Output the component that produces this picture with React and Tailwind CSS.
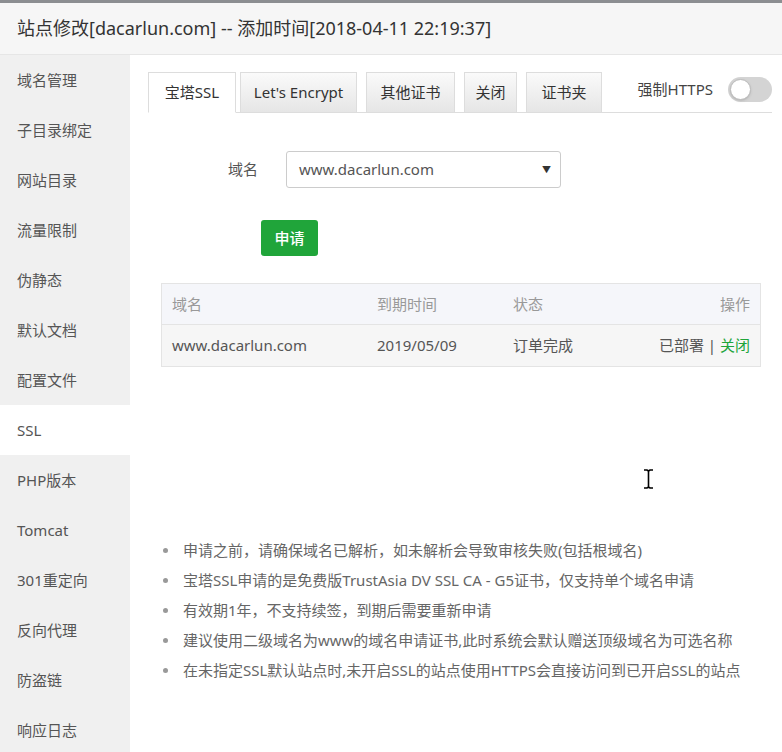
import React from "react";

const menu = [
  "域名管理",
  "子目录绑定",
  "网站目录",
  "流量限制",
  "伪静态",
  "默认文档",
  "配置文件",
  "SSL",
  "PHP版本",
  "Tomcat",
  "301重定向",
  "反向代理",
  "防盗链",
  "响应日志",
];

const tabs = [
  { name: "宝塔SSL", w: "w-[88px]", active: true },
  { name: "Let's Encrypt", w: "w-[117px]" },
  { name: "其他证书", w: "w-[89px]" },
  { name: "关闭", w: "w-[53px]" },
  { name: "证书夹", w: "w-[76px]" },
];

const tips = [
  "申请之前，请确保域名已解析，如未解析会导致审核失败(包括根域名)",
  "宝塔SSL申请的是免费版TrustAsia DV SSL CA - G5证书，仅支持单个域名申请",
  "有效期1年，不支持续签，到期后需要重新申请",
  "建议使用二级域名为www的域名申请证书,此时系统会默认赠送顶级域名为可选名称",
  "在未指定SSL默认站点时,未开启SSL的站点使用HTTPS会直接访问到已开启SSL的站点",
];

const font = {
  fontFamily: '"Noto Sans", "Noto Sans CJK SC", sans-serif',
};

export default function App() {
  return (
    <div
      className="w-[782px] h-[752px] overflow-hidden bg-white relative"
      style={font}
    >
      <div className="h-[3px] bg-[#8c8e91]" />
      <div className="h-[52px] bg-[#f6f6f6] border-b border-[#e6e6e6] pl-[17px] flex items-center text-[18px] text-[#333]">
        站点修改[dacarlun.com] -- 添加时间[2018-04-11 22:19:37]
      </div>

      <div className="flex">
        {/* sidebar */}
        <div className="w-[130px] shrink-0 bg-[#f0f0f0] h-[697px]">
          {menu.map((m) => (
            <div
              key={m}
              className={`h-[50px] flex items-center pl-[17px] text-[15px] text-[#555] ${
                m === "SSL" ? "bg-white" : ""
              }`}
            >
              {m}
            </div>
          ))}
        </div>

        {/* content */}
        <div className="flex-1 pl-[18px] pr-[10px] pt-[18px]">
          <div className="flex items-end border-b border-[#ddd] h-[40px]">
            {tabs.map((t) => (
              <div
                key={t.name}
                className={`${t.w} h-[40px] flex items-center justify-center text-[15px] text-[#333] border border-[#ddd] ${
                  t.active
                    ? "bg-white border-b-white mb-[-1px] h-[41px] mr-[4px]"
                    : "mr-[9px] bg-gradient-to-b from-[#fafafa] to-[#e6e6e6] border-b-0"
                }`}
              >
                {t.name}
              </div>
            ))}
            <div className="ml-auto self-center flex items-center mt-[-6px]">
              <span className="text-[15px] text-[#444] mr-[15px]">强制HTTPS</span>
              <div className="w-[44px] h-[25px] rounded-full bg-[#d4d4d4] p-[2px] flex items-center">
                <div className="w-[21px] h-[21px] rounded-full bg-white border border-[#bbb] shadow" />
              </div>
            </div>
          </div>

          <div className="flex items-center mt-[38px]">
            <div className="w-[112px] text-right text-[15px] text-[#555] pr-[2px]">域名</div>
            <div className="ml-[26px] w-[275px] h-[37px] border border-[#ccc] rounded-[3px] flex items-center justify-between pl-[12px] pr-[9px] text-[15px] text-[#555]">
              <span>www.dacarlun.com</span>
              <span className="text-[9px] text-[#333]">▼</span>
            </div>
          </div>

          <button className="mt-[32px] ml-[113px] w-[57px] h-[36px] bg-[#20a53a] rounded-[3px] text-white text-[15px] font-medium">
            申请
          </button>

          <div className="mt-[27px] ml-[13px] mr-[11px] border border-[#e4e4e4]">
            <div className="h-[41px] flex items-center bg-[#f5f6fa] border-b border-[#e4e4e4] text-[15px] text-[#999] px-[10px]">
              <div className="w-[205px]">域名</div>
              <div className="w-[136px]">到期时间</div>
              <div className="flex-1">状态</div>
              <div>操作</div>
            </div>
            <div className="h-[41px] flex items-center bg-[#f6f6f6] text-[15px] text-[#555] px-[10px]">
              <div className="w-[205px]">www.dacarlun.com</div>
              <div className="w-[136px]">2019/05/09</div>
              <div className="flex-1">订单完成</div>
              <div>
                已部署 | <span className="text-[#20a53a]">关闭</span>
              </div>
            </div>
          </div>

          <ul className="mt-[168px] ml-[15px]">
            {tips.map((t) => (
              <li key={t} className="h-[30px] flex items-center text-[15px] text-[#666] whitespace-nowrap">
                <span className="w-[5px] h-[5px] rounded-full bg-[#999] mr-[15px] shrink-0" />
                {t}
              </li>
            ))}
          </ul>
        </div>
      </div>

      {/* mouse cursor */}
      <svg
        className="absolute left-[643px] top-[469px]"
        width="11"
        height="20"
        viewBox="0 0 11 20"
      >
        <path d="M1 1h3l1.5 1 1.5-1h3M5.5 2v16M1 19h3l1.5-1 1.5 1h3" stroke="#000" strokeWidth="1.6" fill="none" />
      </svg>
    </div>
  );
}
